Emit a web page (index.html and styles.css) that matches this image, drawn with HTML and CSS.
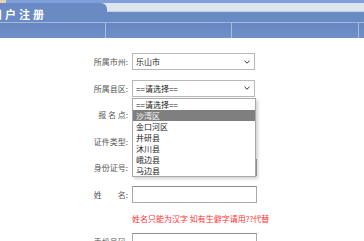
FILE: index.html
```html
<!DOCTYPE html>
<html lang="zh-CN">
<head>
    <meta charset="UTF-8">
    <meta name="viewport" content="width=device-width, initial-scale=1.0">
    <title>用户注册</title>
    <link rel="stylesheet" href="styles.css">
</head>
<body>
    <div class="top">
        <div class="top-strip"></div>
        <div class="tabs">
            <div class="tab"><span class="tab-title">用户注册</span></div>
            <div class="tab-rest"></div>
        </div>
        <div class="subbar">
            <span class="cell c1"></span>
            <span class="cell c2"></span>
            <span class="cell c3"></span>
            <span class="cell c4"></span>
        </div>
    </div>

    <div class="form">
        <label>所属市州:</label>
        <div class="select"><span>乐山市</span><svg class="arrow" width="6" height="4" viewBox="0 0 6 4"><path d="M0.5 0.8 L3 3.2 L5.5 0.8" fill="none" stroke="#333" stroke-width="1"/></svg></div>

        <label>所属县区:</label>
        <div class="field">
            <div class="select"><span>==请选择==</span><svg class="arrow" width="6" height="4" viewBox="0 0 6 4"><path d="M0.5 0.8 L3 3.2 L5.5 0.8" fill="none" stroke="#333" stroke-width="1"/></svg></div>
            <ul class="dropdown">
                <li>==请选择==</li>
                <li class="active">沙湾区</li>
                <li>金口河区</li>
                <li>井研县</li>
                <li>沐川县</li>
                <li>峨边县</li>
                <li>马边县</li>
            </ul>
        </div>

        <label>报 名 点:</label>
        <div class="select"><span></span></div>

        <label>证件类型:</label>
        <div class="select"><span></span></div>

        <label>身份证号:</label>
        <div class="input"></div>

        <label>姓　　名:</label>
        <div class="input"></div>

        <span></span>
        <div class="error">姓名只能为汉字 如有生僻字请用??代替</div>

        <label>手机号码:</label>
        <div class="input"></div>
    </div>
</body>
</html>
```

FILE: styles.css
```css
body {
    margin: 0;
    font-family: "Noto Sans CJK SC", "Noto Sans", sans-serif;
    background-color: #fff;
    overflow: hidden;
}
.top-strip {
    height: 3px;
    background: linear-gradient(to right, #ead2b8 6px, #7fa0db 6px);
}
.tabs {
    display: flex;
    height: 19px;
    background: linear-gradient(to bottom, #dfe5ef 8px, #c3cfe3 8px, #c3cfe3 9px, #6a8ac3 9px);
}
.tab {
    width: 107px;
    background-color: #6a8ac3;
    border-top-right-radius: 6px;
    overflow: hidden;
}
.tab-title {
    display: block;
    margin-left: -9px;
    padding-top: 4px;
    line-height: 14px;
    font-size: 11px;
    font-weight: bold;
    letter-spacing: 3px;
    color: #fff;
    white-space: nowrap;
}
.tab-rest {
    flex: 1;
}
.subbar {
    display: flex;
    height: 15px;
    border-top: 1px solid #a3b8de;
    background: linear-gradient(to bottom, #6887c0, #6f8fc8);
}
.cell {
    border-right: 1px solid #a9bee2;
}
.c1 { width: 105px; }
.c2 { width: 125px; }
.c3 { width: 126px; }
.c4 { flex: 1; border-right: none; }

.form {
    display: grid;
    grid-template-columns: 128px 125px;
    column-gap: 4px;
    row-gap: 9.6px;
    padding-top: 15px;
}
label {
    font-size: 8px;
    line-height: 17px;
    color: #555;
    text-align: right;
    white-space: nowrap;
}
.field {
    position: relative;
}
.select {
    box-sizing: border-box;
    width: 123px;
    height: 17px;
    border: 1px solid #b8b8b8;
    padding: 0 4px 0 3px;
    display: flex;
    align-items: center;
    justify-content: space-between;
    font-size: 8px;
    color: #222;
    background-color: #fff;
}
.arrow {
    display: block;
}
.input {
    box-sizing: border-box;
    width: 125px;
    height: 17px;
    border: 1px solid #a9a9a9;
    border-top-color: #8f8f8f;
    background-color: #fff;
}
.dropdown {
    position: absolute;
    top: 18px;
    left: 0;
    width: 124px;
    box-sizing: border-box;
    margin: 0;
    padding: 0;
    list-style: none;
    background-color: #fff;
    border: 1px solid #a8a8a8;
    box-shadow: 2px 2px 3px rgba(0, 0, 0, 0.18);
    z-index: 2;
}
.dropdown li {
    height: 11px;
    line-height: 11px;
    padding-left: 3px;
    font-size: 8px;
    color: #222;
}
.dropdown .active {
    background-color: #7f7f7f;
    color: #fff;
}
.error {
    font-size: 8px;
    line-height: 11px;
    color: #f33;
    white-space: nowrap;
}
```
